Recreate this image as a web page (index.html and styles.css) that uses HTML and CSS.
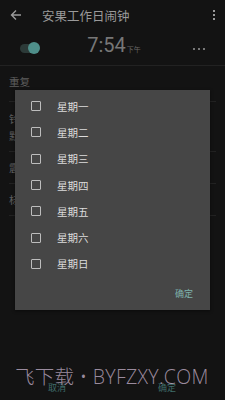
FILE: index.html
```html
<!DOCTYPE html>
<html lang="zh">
<head>
<meta charset="utf-8">
<link rel="stylesheet" href="styles.css">
</head>
<body>
<div class="screen">
  <header class="topbar">
    <svg class="back" width="12" height="12" viewBox="0 0 12 12"><path d="M11 6H2M6 1.5L1.5 6 6 10.5" fill="none" stroke="#9a9a9a" stroke-width="1.4"/></svg>
    <span class="title">安果工作日闹钟</span>
    <span class="menu"><i></i><i></i><i></i></span>
  </header>
  <section class="alarm">
    <span class="toggle"><span class="thumb"></span></span>
    <span class="time">7:54<small>下午</small></span>
    <span class="more"><i></i><i></i><i></i></span>
  </section>
  <div class="settings">
    <div class="set-row tall"><span>重复</span></div>
    <div class="set-row double"><span>铃声</span><span>默认</span></div>
    <div class="set-row"><span>震动</span></div>
    <div class="set-row"><span>标签</span></div>
  </div>
  <footer class="actions">
    <span>取消</span>
    <span>确定</span>
  </footer>

  <div class="dialog">
    <ul class="days">
      <li><span class="box"></span>星期一</li>
      <li><span class="box"></span>星期二</li>
      <li><span class="box"></span>星期三</li>
      <li><span class="box"></span>星期四</li>
      <li><span class="box"></span>星期五</li>
      <li><span class="box"></span>星期六</li>
      <li><span class="box"></span>星期日</li>
    </ul>
    <div class="dialog-actions"><span>确定</span></div>
  </div>

  <div class="watermark">飞下载 • BYFZXY.COM</div>
</div>
</body>
</html>
```
FILE: styles.css
```css
* { box-sizing: border-box; margin: 0; padding: 0; }
html, body { width: 225px; height: 400px; background: #131313; overflow: hidden; }
body { font-family: "Noto Sans CJK SC", "Noto Sans", sans-serif; }
.screen { position: relative; width: 225px; height: 400px; display: flex; flex-direction: column; }

.topbar { height: 30px; display: flex; align-items: center; padding: 0 10px 0 10px; }
.back { flex: none; }
.title { margin-left: 20px; font-size: 12.5px; color: #9a9a9a; flex: 1; }
.menu { display: flex; flex-direction: column; gap: 2px; }
.menu i { width: 2px; height: 2px; background: #9a9a9a; display: block; }

.alarm { height: 36px; display: flex; align-items: center; padding: 0 20px 0 20px; border-bottom: 1px solid #222; position: relative; }
.toggle { width: 19px; height: 9px; border-radius: 5px; background: #2c3a38; position: relative; margin-top: 2px; }
.thumb { position: absolute; right: -1px; top: -2px; width: 12px; height: 12px; border-radius: 50%; background: #4f8f8a; }
.time { flex: 1; text-align: center; font-family: "Roboto", sans-serif; font-size: 20px; color: #777; margin-left: -4px; margin-top: -6px; }
.time small { font-family: "Noto Sans CJK SC", sans-serif; font-size: 7px; color: #666; margin-left: 1px; }
.more { display: flex; gap: 3px; margin-top: 2px; }
.more i { display: block; width: 2px; height: 2px; background: #777; }

.settings { flex: 1; padding: 0 9px; }
.set-row { font-size: 10.5px; color: #5e5e5e; border-bottom: 1px solid #222; padding: 8px 0; display: flex; flex-direction: column; }
.set-row.tall { height: 36px; }
.set-row.double { height: 50px; justify-content: center; gap: 2px; }

.actions { height: 26px; display: flex; justify-content: space-between; align-items: center; font-size: 9px; color: #3f6c6a; padding: 0 49px 0 48px; }

.dialog { position: absolute; left: 15px; top: 90px; width: 195px; height: 220px; background: #464646; box-shadow: 0 1px 3px rgba(0,0,0,.5); display: flex; flex-direction: column; }
.days { list-style: none; padding-top: 3px; }
.days li { height: 26.3px; display: flex; align-items: center; padding-left: 16px; font-size: 10.5px; color: #dcdcdc; }
.box { width: 10px; height: 10px; border: 1.5px solid #bdbdbd; border-radius: 1px; margin-right: 16px; }
.dialog-actions { flex: 1; display: flex; justify-content: flex-end; align-items: center; padding-right: 17px; font-size: 9px; color: #7fb3ad; }

.watermark { position: absolute; left: 15px; top: 361px; font-family: "Open Sans", "Noto Sans CJK SC", sans-serif; font-size: 19.5px; font-weight: 300; color: rgba(200,180,205,0.75); white-space: nowrap; letter-spacing: 0.3px; }
```
